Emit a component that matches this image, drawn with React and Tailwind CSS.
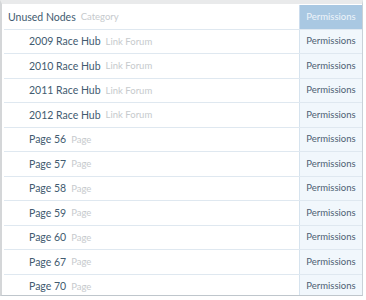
import React from "react";

const rows = [
  ["2009 Race Hub", "Link Forum"],
  ["2010 Race Hub", "Link Forum"],
  ["2011 Race Hub", "Link Forum"],
  ["2012 Race Hub", "Link Forum"],
  ["Page 56", "Page"],
  ["Page 57", "Page"],
  ["Page 58", "Page"],
  ["Page 59", "Page"],
  ["Page 60", "Page"],
  ["Page 67", "Page"],
  ["Page 70", "Page"],
];

export default function App() {
  return (
    <div className="w-[366px] h-[300px] overflow-hidden bg-white font-['Lato',sans-serif]">
      <div className="h-[296px] w-[363px] border-l-2 border-r border-b border-t-4 border-l-[#d4d6d8] border-r-[#c9d1d8] border-b-[#bfc6cc] border-t-[#e9eaeb] pl-[2px] pt-[1px] overflow-hidden">
        <div className="flex h-[24.5px] border-b border-[#dfe8f0]">
          <div className="flex-1 flex items-center pl-[4px] gap-[5px] leading-none">
            <span className="text-[#425b70] text-[10.5px]">Unused Nodes</span>
            <span className="text-[#c6cacd] text-[9.5px]">Category</span>
          </div>
          <div className="w-[63px] bg-[#a9c8e2] flex items-center justify-center text-[9.5px] text-[#eef4fa] border-l border-[#cbdced]">
            Permissions
          </div>
        </div>
        {rows.map(([name, type], i) => (
          <div key={i} className="flex h-[24.5px] border-b border-[#dfe8f0]">
            <div className="flex-1 flex items-center pl-[25px] gap-[5px] leading-none">
              <span className="text-[#425b70] text-[10.5px]">{name}</span>
              <span className="text-[#c6cacd] text-[9.5px]">{type}</span>
            </div>
            <div className="w-[63px] bg-[#f1f7fc] flex items-center justify-center text-[9.5px] text-[#4e6173] border-l border-[#d6e3ee]">
              Permissions
            </div>
          </div>
        ))}
      </div>
    </div>
  );
}
